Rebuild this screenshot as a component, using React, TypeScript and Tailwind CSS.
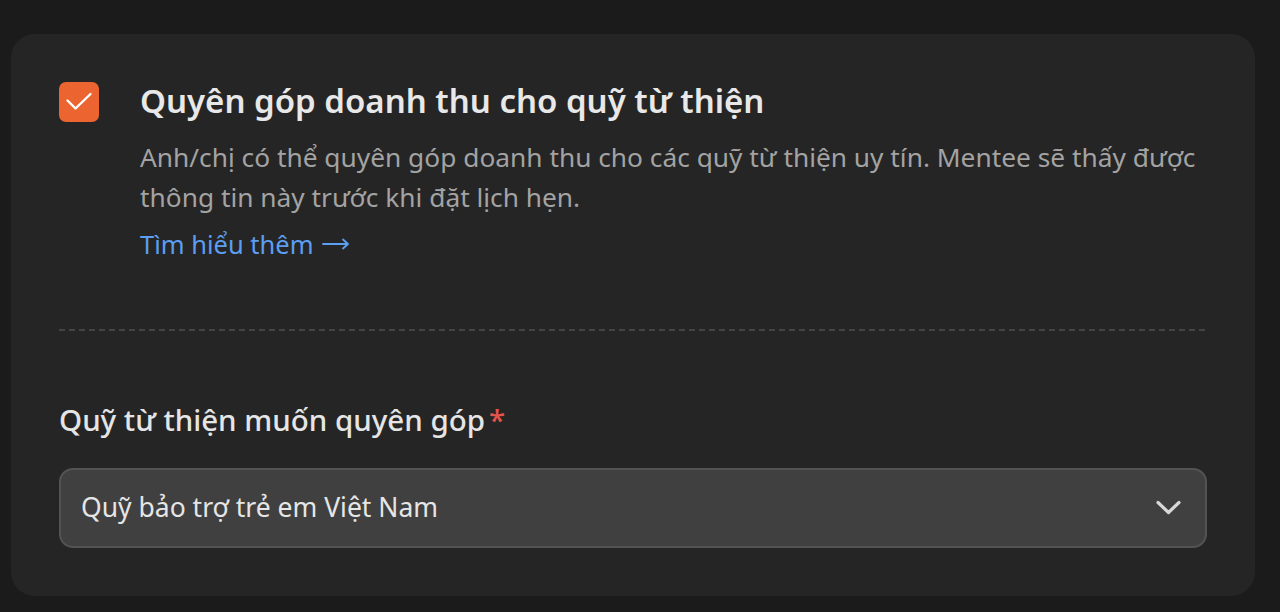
import React from "react";

export default function App() {
  return (
    <div
      className="w-[1280px] h-[612px] bg-[#1b1b1b] pt-[34px] pl-[11px] overflow-hidden"
      style={{ fontFamily: '"Noto Sans", "Open Sans", sans-serif' }}
    >
      <div className="w-[1244px] h-[562px] bg-[#252525] rounded-[24px] px-[48px] pt-[48px]">
        <div className="flex gap-[41px]">
          <div className="w-[40px] h-[40px] shrink-0 rounded-[7px] bg-[#ec6530]">
            <svg className="w-[40px] h-[40px]" width="40" height="40" viewBox="0 0 40 40" fill="none">
              <path d="M8.5 18.5L16.5 26.5L31.5 12" stroke="#fff" strokeWidth="2.4" strokeLinecap="round" strokeLinejoin="round" />
            </svg>
          </div>
          <div className="flex flex-col min-w-0">
            <div className="text-[33px] leading-[40px] font-semibold text-[#e8e8e8] -mt-[1px] whitespace-nowrap">
              Quyên góp doanh thu cho quỹ từ thiện
            </div>
            <div className="text-[26.3px] leading-[40px] text-[#a3a3a3] mt-[16px]">
              Anh/chị có thể quyên góp doanh thu cho các quỹ từ thiện uy tín. Mentee sẽ thấy được thông tin này trước khi đặt lịch hẹn.
            </div>
            <div className="text-[25.5px] leading-[40px] text-[#5c9ef2] mt-[7px] flex items-center">
              Tìm hiểu thêm
              <svg className="ml-[8px] w-[28px] h-[14px]" width="28" height="14" viewBox="0 0 28 14" fill="none">
                <path d="M1 7H26M21 2.5L26 7L21 11.5" stroke="#5c9ef2" strokeWidth="1.8" strokeLinecap="round" strokeLinejoin="round" />
              </svg>
            </div>
          </div>
        </div>
        <div className="mt-[65px] h-[2px] bg-[repeating-linear-gradient(to_right,#444444_0px,#444444_6px,transparent_6px,transparent_10px)]" />
        <div className="mt-[69px] text-[29.5px] leading-[40px] font-medium text-[#e5e5e5] flex">
          Quỹ từ thiện muốn quyên góp<span className="text-[#e5534b] ml-[4px]">*</span>
        </div>
        <div className="mt-[28px] h-[80px] rounded-[14px] bg-[#404040] border-2 border-[#535353] flex items-center justify-between pl-[20px] pr-[22px]">
          <span className="text-[26.5px] text-[#e6e6e6]">Quỹ bảo trợ trẻ em Việt Nam</span>
          <svg className="w-[28px] h-[20px]" width="28" height="20" viewBox="0 0 28 20" fill="none">
            <path d="M3 4.5L13.5 14.5L24 4.5" stroke="#d8d8d8" strokeWidth="3.2" strokeLinecap="round" strokeLinejoin="round" />
          </svg>
        </div>
      </div>
    </div>
  );
}
